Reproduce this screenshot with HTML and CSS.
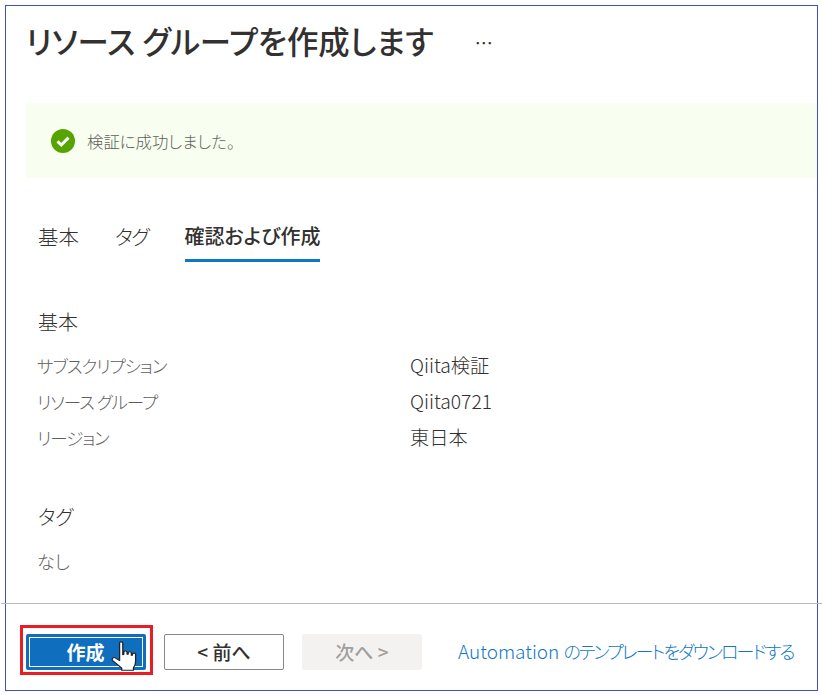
FILE: index.html
```html
<!DOCTYPE html>
<html lang="ja">
<head>
<meta charset="utf-8">
<title>リソース グループを作成します</title>
<link rel="stylesheet" href="styles.css">
</head>
<body>
<div class="frame">
  <header class="header">
    <h1 class="title">リソース グループを作成します</h1>
    <span class="more">…</span>
  </header>
  <div class="banner">
    <svg class="check" width="24" height="24" viewBox="0 0 24 24"><circle cx="12" cy="12" r="12" fill="#57a300"/><path d="M6.500 12.400l3.800 3.600 7.200-7.400" fill="none" stroke="#fff" stroke-width="3"/></svg>
    <span class="banner-text">検証に成功しました。</span>
  </div>
  <nav class="tabs">
    <span class="tab">基本</span>
    <span class="tab tab-tag">タグ</span>
    <span class="tab active">確認および作成</span>
  </nav>
  <main class="content">
    <h2 class="section">基本</h2>
    <dl class="rows">
      <div class="row"><dt>サブスクリプション</dt><dd>Qiita検証</dd></div>
      <div class="row"><dt>リソース グループ</dt><dd>Qiita0721</dd></div>
      <div class="row"><dt>リージョン</dt><dd>東日本</dd></div>
    </dl>
    <h2 class="section tag-head">タグ</h2>
    <p class="none">なし</p>
  </main>
  <footer class="footer">
    <div class="highlight">
      <button class="btn primary"><span class="primary-inner">作成</span></button>
      <svg class="cursor" width="32" height="32" viewBox="0 0 30 36" preserveAspectRatio="none"><path d="M9 2.500c0-2 3-2 3 0v13l1-.5v-2.500c0-1.800 3-1.800 3 0V15l1 0v-1.500c0-1.800 3-1.800 3 0V16l1 0v-1c0-1.800 3-1.800 3 0v8c0 3-.800 5-2 7v3H11v-2.500L2.500 22c-1.500-2 .800-4.500 2.800-2.800L9 22z" fill="#fff" stroke="#222" stroke-width="1.200" stroke-linejoin="round"/></svg>
    </div>
    <button class="btn secondary">&lt;&nbsp;前へ</button>
    <button class="btn disabled">次へ&nbsp;&gt;</button>
    <a class="link" href="#">Automation <span class="link-ja">のテンプレートをダウンロードする</span></a>
  </footer>
</div>
</body>
</html>
```
FILE: styles.css
```css
* { box-sizing: border-box; }
html, body { margin: 0; padding: 0; background: #fff; }
body {
  font-family: "Noto Sans CJK JP", "Noto Sans", sans-serif;
  font-feature-settings: "palt";
  color: #323130;
}
.frame {
  width: 813px;
  height: 686px;
  margin: 5px 0 0 5px;
  border: 1px solid #4250c8;
  display: flex;
  flex-direction: column;
}
.header {
  height: 97px;
  padding: 11px 0 0 20px;
  display: flex;
  align-items: flex-start;
  flex: none;
}
.title {
  margin: 0;
  font-size: 31.400px;
  font-weight: 500;
  line-height: 48px;
  white-space: nowrap;
}
.more { margin: 11px 0 0 41px; font-size: 18px; line-height: 28px; }
.banner {
  flex: none;
  height: 75px;
  margin-left: 20px;
  padding-left: 25px;
  background: #f8fff0;
  display: flex;
  align-items: center;
  gap: 12px;
}
.banner-text { font-size: 16.400px; font-weight: 300; color: #605e5c; }
.tabs {
  flex: none;
  display: flex;
  gap: 36px;
  margin: 36px 0 0 32px;
  height: 48px;
}
.tab { font-size: 20.500px; font-weight: 300; line-height: 44px; height: 48px; }
.tab-tag { letter-spacing: -1.500px; }
.tab.active { font-size: 20px; font-weight: 500; border-bottom: 3px solid #0f78c4; }
.content { flex: 1; padding: 0 0 0 32px; min-height: 0; }
.section { margin: 0; font-size: 20px; font-weight: 300; line-height: 30px; }
.content > .section:first-child { margin-top: 45px; }
.rows { margin: 10px 0 0; }
.row { display: flex; height: 36px; align-items: center; }
.row dt { width: 373px; margin-left: -1px; font-size: 17.500px; font-weight: 300; letter-spacing: -1px; color: #605e5c; }
.row dd { margin: 0; font-size: 19.300px; font-weight: 300; }
.tag-head { margin-top: 47px; }
.none { margin: 14px 0 0 -1px; font-size: 18px; font-weight: 300; color: #605e5c; line-height: 30px; }
.footer {
  flex: none;
  height: 87px;
  margin: 0 -5px;
  border-top: 1px solid #b9b8b7;
  display: flex;
  align-items: center;
  padding: 6px 0 0 19px;
}
.highlight {
  position: relative;
  flex: none;
  width: 133px;
  height: 50px;
  border: 3px solid #ea1c24;
  padding: 6px 0 6px 3px;
}
.btn {
  flex: none;
  font-family: inherit;
  font-feature-settings: inherit;
  font-size: 19px;
  height: 36px;
  width: 120px;
  padding: 0;
  border-radius: 2px;
}
.primary {
  display: block;
  background: #106ebe;
  border: 0;
  padding: 3px;
  color: #fff;
  font-weight: 700;
}
.primary-inner {
  display: block;
  height: 30px;
  line-height: 28px;
  border: 1px solid #fff;
  padding-right: 1px;
}
.cursor { position: absolute; left: 87px; top: 13px; }
.secondary {
  margin: 4px 0 0 11px;
  padding-bottom: 2px;
  background: #fff;
  border: 1px solid #8a8886;
  color: #323130;
  font-weight: 500;
}
.disabled {
  margin: 4px 0 0 18px;
  padding-bottom: 2px;
  background: #f3f2f1;
  border: 0;
  color: #a19f9d;
  font-weight: 500;
}
.link {
  flex: none;
  margin-left: 36px;
  font-size: 19px;
  font-weight: 300;
  color: #0f78c4;
  text-decoration: none;
  white-space: nowrap;
}
.link-ja { font-size: 18px; letter-spacing: -1.900px; }
```
